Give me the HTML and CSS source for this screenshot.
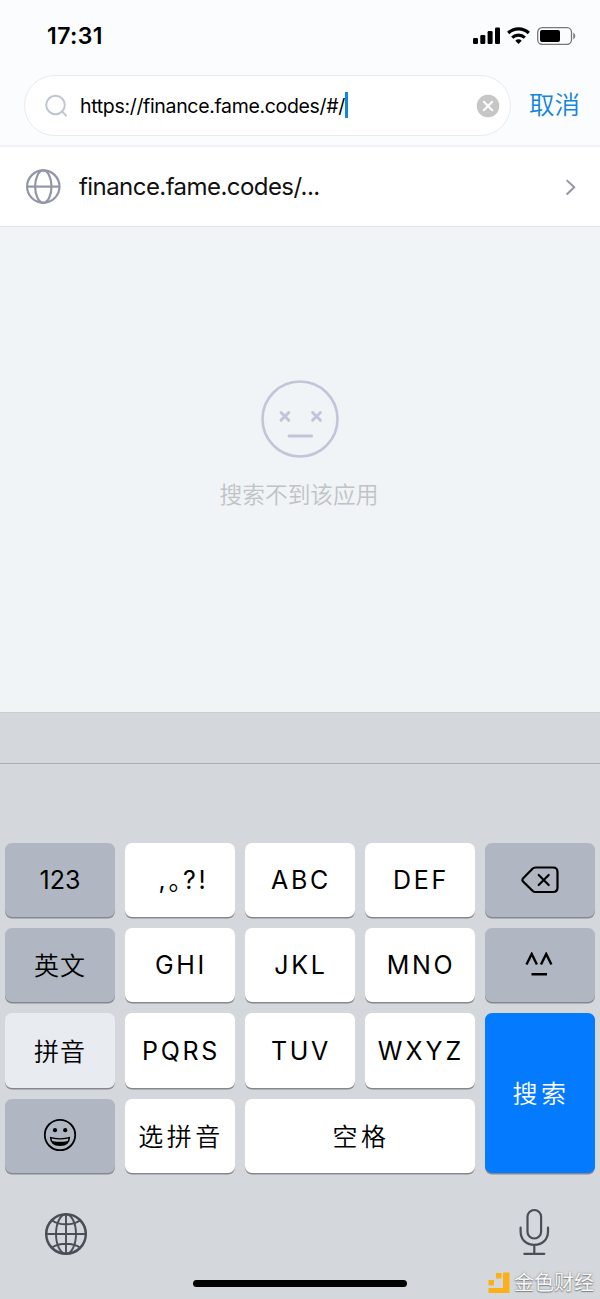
FILE: index.html
```html
<!DOCTYPE html>
<html lang="zh-CN">
<head>
  <meta charset="UTF-8" />
  <meta name="viewport" content="width=device-width, initial-scale=1.0" />
  <title>搜索</title>
  <link rel="stylesheet" href="styles.css">
</head>
<body>
  <div class="screen">
    <header class="header">
      <div class="status-bar">
        <span class="time">17:31</span>
        <svg class="status-icons" width="104" height="20" viewBox="0 0 104 20">
          <rect x="1" y="12" width="5" height="6" rx="1.2"/>
          <rect x="8.3" y="9" width="5" height="9" rx="1.2"/>
          <rect x="15.6" y="5" width="5" height="13" rx="1.2"/>
          <rect x="23" y="1.5" width="5" height="16.5" rx="1.2"/>
          <g fill="none" stroke="#000" stroke-width="3.2">
            <path d="M36.2 7a14.8 14.8 0 0 1 20.6 0"/>
            <path d="M40.2 11.6a9.2 9.2 0 0 1 12.6 0"/>
          </g>
          <path d="M46.5 18l-3.2-3.3a4.8 4.8 0 0 1 6.4 0z"/>
          <rect x="65.7" y="1.7" width="33.8" height="16.6" rx="4.5" fill="none" stroke="#777" stroke-width="1.3"/>
          <rect x="68" y="4" width="20" height="12" rx="2"/>
          <path d="M101.2 6.6q2.2 1.1 2.2 3.4t-2.2 3.4z" fill="#888"/>
        </svg>
      </div>
      <div class="search-row">
        <div class="search-box">
          <svg class="search-icon" width="24" height="24" viewBox="0 0 24 24" fill="none" stroke="#bfc5d3" stroke-width="2" stroke-linecap="round">
            <circle cx="10.5" cy="11" r="9.3"/>
            <path d="M17.3 17.8l3.8 3.8"/>
          </svg>
          <span class="url">https://finance.fame.codes/#/</span>
          <span class="caret"></span>
          <svg class="clear" width="24" height="24" viewBox="0 0 24 24">
            <circle cx="12" cy="12" r="11.3" fill="#c6c6c6"/>
            <path d="M7.8 7.8l8.4 8.4M16.2 7.8l-8.4 8.4" stroke="#fff" stroke-width="2.1" stroke-linecap="round"/>
          </svg>
        </div>
        <span class="cancel">取消</span>
      </div>
    </header>

    <div class="result">
      <svg width="36" height="36" viewBox="0 0 36 36" fill="none" stroke="#9395a8" stroke-width="2.2">
        <circle cx="18.3" cy="17.6" r="16.2"/>
        <ellipse cx="18.3" cy="17.6" rx="8.2" ry="16.2"/>
        <path d="M2 17.6h32"/>
      </svg>
      <span class="result-name">finance.fame.codes/...</span>
      <svg class="chevron" width="12" height="18" viewBox="0 0 12 18" fill="none" stroke="#9395a8" stroke-width="2" stroke-linecap="round">
        <path d="M2.2 2.6l7 6.7-7 6.7"/>
      </svg>
    </div>

    <main class="empty">
      <svg width="80" height="80" viewBox="0 0 80 80" fill="none" stroke="#c2c5d8" stroke-width="2.6" stroke-linecap="round">
        <circle cx="40" cy="40" r="37.5"/>
        <path d="M21 33.5l7.8 7.8M28.8 33.5L21 41.300M52.6 33.500l7.8 7.8M60.4 33.500l-7.8 7.8M29 57h22.500" stroke-width="3"/>
      </svg>
      <p>搜索不到该应用</p>
    </main>

    <section class="keyboard">
      <div class="toolbar"></div>
      <div class="keys">
        <div class="key dark num">123</div>
        <div class="key punct">,<span class="stop">。</span>?!</div>
        <div class="key">ABC</div>
        <div class="key">DEF</div>
        <div class="key dark">
          <svg width="40" height="30" viewBox="0 0 40 30" fill="none" stroke="#000" stroke-width="2.2" stroke-linecap="round" stroke-linejoin="round">
            <path d="M15.5 2.500H33q4.500 0 4.500 4.500v15.500q0 4.500-4.500 4.500H15.500q-1.800 0-3-1.200L3.200 16.600q-1.700-1.700 0-3.400l9.300-9.500q1.200-1.200 3-1.200z"/>
            <path d="M18.7 10l10 10M28.700 10l-10 10"/>
          </svg>
        </div>
        <div class="key dark cn">英文</div>
        <div class="key">GHI</div>
        <div class="key">JKL</div>
        <div class="key">MNO</div>
        <div class="key dark">
          <svg width="30" height="26" viewBox="0 0 30 26" fill="none" stroke="#000" stroke-width="2.4">
            <path d="M1.500 12.500L6.700 2l5.200 10.500M16 12.500L21.200 2l5.200 10.500M6.500 22.200h15.500"/>
          </svg>
        </div>
        <div class="key light cn">拼音</div>
        <div class="key">PQRS</div>
        <div class="key">TUV</div>
        <div class="key wxyz">WXYZ</div>
        <div class="key search cn wide">搜索</div>
        <div class="key dark">
          <svg class="smiley" width="34" height="34" viewBox="0 0 34 34">
            <circle cx="17" cy="17" r="15.2" fill="none" stroke="#000" stroke-width="1.8"/>
            <circle cx="12" cy="12.2" r="2.100"/>
            <circle cx="22.200" cy="12.2" r="2.100"/>
            <path d="M6.800 18.800q10.200 2.800 20.400 0-.2 9.200-10.200 9.200T6.800 18.800z"/>
            <path d="M8.500 20.600q8.500 2 17 0l-.8 2.300q-7.700 1.800-15.400 0z" fill="#b0b7c2"/>
          </svg>
        </div>
        <div class="key cn wide">选拼音</div>
        <div class="key space cn wide">空格</div>
      </div>
      <div class="bottom-bar">
        <svg width="44" height="44" viewBox="0 0 44 44" fill="none" stroke="#4a4e57" stroke-width="1.9">
          <circle cx="22" cy="22" r="19.8" stroke-width="2.5"/>
          <ellipse cx="22" cy="22" rx="10" ry="19.8"/>
          <path d="M22 2v40M2 22h40M8 8.500q5.500 3.800 14 3.800t14-3.800M8 35.500q5.500-3.800 14-3.800t14 3.800"/>
        </svg>
        <svg width="32" height="48" viewBox="0 0 32 48" fill="none" stroke="#4a4e57" stroke-width="2.2" stroke-linecap="round">
          <rect x="9.500" y="2" width="13.600" height="28.500" rx="6.800"/>
          <path d="M2.600 19.500v4c0 8 5.500 13.300 13.700 13.300S30 31.500 30 23.500v-4M16.300 37v8.500M6.300 45.800h20"/>
        </svg>
      </div>
      <div class="home-indicator"></div>
    </section>

    <div class="watermark">
      <svg width="24" height="24" viewBox="0 0 24 24" fill="#fbb018">
        <path d="M16 1.500h6.500v20.500H1.500v-5H16z"/>
        <rect x="9" y="2" width="5.500" height="5.500"/>
        <rect x="1.500" y="9" width="5.500" height="5.500"/>
      </svg>
      <span>金色财经</span>
    </div>
  </div>
</body>
</html>
```
FILE: styles.css
```css
* {
  box-sizing: border-box;
}
body {
  margin: 0;
  font-family: Inter, "Noto Sans CJK SC", sans-serif;
  color: #000;
}
svg {
  display: block;
  flex: none;
}
.screen {
  position: relative;
  width: 600px;
  height: 1299px;
  display: flex;
  flex-direction: column;
  overflow: hidden;
  background: #f0f4f6;
}
.header {
  height: 147px;
  background: #fbfcfe;
  border-bottom: 2px solid #f0f1f4;
}
.status-bar {
  height: 75px;
  display: flex;
  align-items: center;
  justify-content: space-between;
  padding: 0 24px 4px 47px;
}
.time {
  font-size: 23px;
  font-weight: 600;
  letter-spacing: 0.4px;
}
.search-row {
  display: flex;
  align-items: center;
  padding-left: 24px;
}
.search-box {
  width: 487px;
  height: 61px;
  display: flex;
  align-items: center;
  padding: 0 10px 0 20px;
  background: #fff;
  border: 1px solid #e7eaf0;
  border-radius: 31px;
}
.url {
  margin-left: 11px;
  font-size: 19.5px;
  letter-spacing: -0.33px;
  white-space: nowrap;
}
.caret {
  width: 3px;
  height: 26px;
  margin-bottom: 2px;
  background: #0c86e0;
}
.clear {
  margin-left: auto;
}
.cancel {
  margin-left: 18px;
  padding-bottom: 2px;
  font-size: 25.5px;
  font-weight: 350;
  line-height: 36px;
  color: #1285dc;
}
.result {
  height: 80px;
  display: flex;
  align-items: center;
  padding: 0 23px 0 25px;
  background: #fff;
  border-bottom: 1px solid #e3e6e9;
}
.result-name {
  margin-left: 18px;
  font-size: 24px;
  letter-spacing: -0.56px;
  color: #111;
}
.chevron {
  margin-left: auto;
}
.empty {
  flex: 1;
  display: flex;
  flex-direction: column;
  align-items: center;
  padding-top: 152px;
}
.empty p {
  margin: 20px 2px 0 0;
  font-size: 22.7px;
  font-weight: 350;
  line-height: 32px;
  color: #bfc3c5;
}

/* keyboard */
.keyboard {
  height: 587px;
  background: #d4d8dd;
  border-top: 1px solid #caced4;
}
.toolbar {
  height: 51px;
  border-bottom: 1px solid #a9adb2;
}
.keys {
  display: grid;
  grid-template-columns: repeat(5, 110px);
  grid-template-rows: 74px 74px 75px 74px;
  gap: 11px 10px;
  padding: 79px 5px 0;
}
.key {
  display: flex;
  align-items: center;
  justify-content: center;
  font-size: 25px;
  font-weight: 380;
  letter-spacing: 2.7px;
  text-indent: 2px;
  background: #fff;
  border-radius: 7px;
  box-shadow: 0 1.5px 0 #85898e;
}
.key.dark {
  background: #b0b7c2;
}
.key.light {
  background: #e8ebf0;
}
.key.num {
  letter-spacing: 0;
  text-indent: 0;
}
.key.wxyz {
  letter-spacing: 3px;
}
.key.cn {
  padding-bottom: 2px;
  font-weight: 350;
  letter-spacing: 1px;
  text-indent: 0;
}
.key.cn.wide {
  letter-spacing: 3.5px;
  text-indent: 2px;
}
.punct {
  padding-left: 5px;
}
/* half-width full stop */
.stop {
  margin-bottom: 2px;
  font-feature-settings: "halt";
  letter-spacing: 0;
  text-indent: 0;
}
.key.search {
  grid-column: 5;
  grid-row: 3 / 5;
  color: #fff;
  background: #047aff;
}
.smiley {
  margin-bottom: 2px;
}
.space {
  grid-column: span 2;
}
.bottom-bar {
  display: flex;
  justify-content: space-between;
  align-items: center;
  padding: 35px 50px 0 44px;
}
.bottom-bar svg:first-child {
  margin-top: 3px;
}
.home-indicator {
  width: 214px;
  height: 7px;
  margin: 24px auto 0;
  background: #000;
  border-radius: 4px;
}
.watermark {
  position: absolute;
  right: 6px;
  bottom: 2px;
  display: flex;
  align-items: center;
  gap: 3px;
  font-size: 20px;
  line-height: 28px;
  color: #f6f7f8;
  text-shadow: 0 0 2px #777, 0 1px 1px #888;
}
```
